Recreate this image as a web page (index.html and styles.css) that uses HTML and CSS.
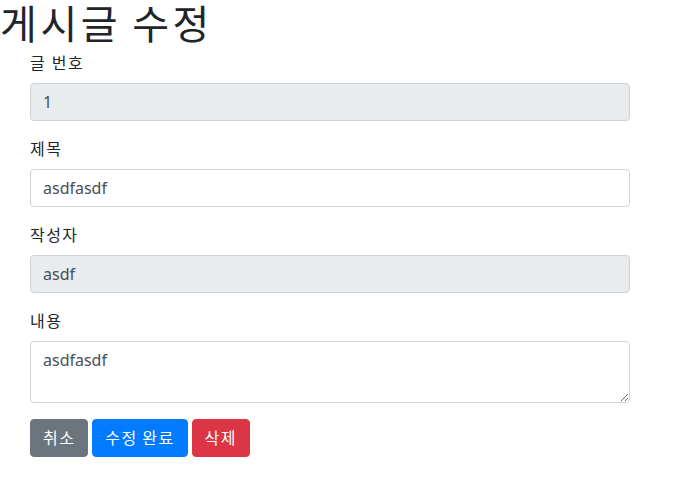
FILE: index.html
```html
<!DOCTYPE html>
<html lang="ko">
<head>
<meta charset="utf-8">
<link rel="stylesheet" href="styles.css">
</head>
<body>
<h1 class="title">게시글 수정</h1>
<form class="edit-form">
  <div class="form-group">
    <label class="form-label">글 번호</label>
    <input class="form-control" type="text" value="1" disabled>
  </div>
  <div class="form-group">
    <label class="form-label">제목</label>
    <input class="form-control" type="text" value="asdfasdf">
  </div>
  <div class="form-group">
    <label class="form-label">작성자</label>
    <input class="form-control" type="text" value="asdf" disabled>
  </div>
  <div class="form-group">
    <label class="form-label">내용</label>
    <textarea class="form-control textarea" rows="2">asdfasdf</textarea>
  </div>
  <div class="actions">
    <button type="button" class="btn btn-secondary">취소</button>
    <button type="button" class="btn btn-primary">수정 완료</button>
    <button type="button" class="btn btn-danger">삭제</button>
  </div>
</form>
</body>
</html>
```
FILE: styles.css
```css
* { box-sizing: border-box; }
body {
  margin: 0;
  font-family: "Segoe UI", "Noto Sans", "Noto Sans CJK KR", sans-serif;
  font-size: 16px;
  line-height: 1.5;
  color: #212529;
  background: #fff;
}
.title {
  margin: 0 0 3px 0;
  font-size: 40px;
  font-weight: 400;
  line-height: 48px;
  letter-spacing: 0.09em;
  word-spacing: -3px;
}
.edit-form {
  width: 600px;
  margin-left: 30px;
}
.form-group {
  margin-bottom: 16px;
}
.form-label {
  display: block;
  margin-bottom: 8px;
  line-height: 24px;
  letter-spacing: 0.09em;
}
.form-control {
  display: block;
  width: 100%;
  height: 38px;
  padding: 6px 12px;
  font-family: inherit;
  font-size: 16px;
  line-height: 24px;
  color: #495057;
  background: #fff;
  border: 1px solid #ced4da;
  border-radius: 4px;
}
.form-control:disabled {
  background: #e9ecef;
  opacity: 1;
}
.textarea {
  height: 62px;
  resize: vertical;
}
.actions {
  display: flex;
  gap: 4px;
}
.btn {
  height: 38px;
  padding: 6px 12px;
  font-family: inherit;
  font-size: 16px;
  line-height: 24px;
  letter-spacing: 0.09em;
  word-spacing: -1px;
  color: #fff;
  border: 1px solid transparent;
  border-radius: 4px;
}
.btn-secondary { background: #6c757d; border-color: #6c757d; }
.btn-primary { background: #007bff; border-color: #007bff; }
.btn-danger { background: #dc3545; border-color: #dc3545; }
```
